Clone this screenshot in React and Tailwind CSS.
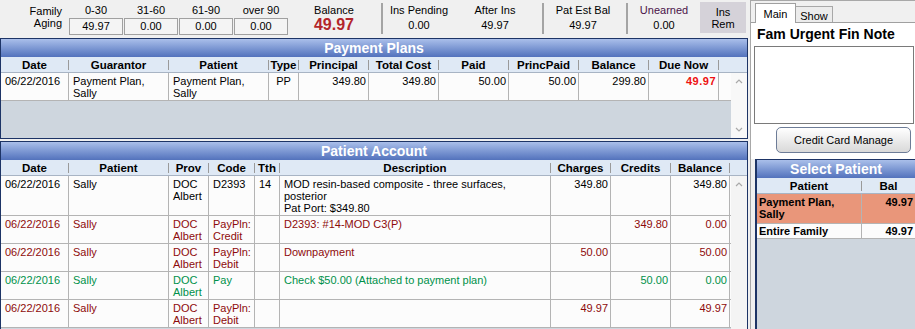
import React from "react";

const aging = [
  ["0-30", "49.97"],
  ["31-60", "0.00"],
  ["61-90", "0.00"],
  ["over 90", "0.00"],
];

const ppCols = [
  { w: "w-[68px]", h: "Date" },
  { w: "w-[100px]", h: "Guarantor" },
  { w: "w-[100px]", h: "Patient" },
  { w: "w-[30px]", h: "Type" },
  { w: "w-[70px]", h: "Principal" },
  { w: "w-[70px]", h: "Total Cost" },
  { w: "w-[70px]", h: "Paid" },
  { w: "w-[70px]", h: "PrincPaid" },
  { w: "w-[70px]", h: "Balance" },
  { w: "w-[70px]", h: "Due Now" },
];

const paCols = [
  { w: "w-[68px]", h: "Date" },
  { w: "w-[100px]", h: "Patient" },
  { w: "w-[40px]", h: "Prov" },
  { w: "w-[46px]", h: "Code" },
  { w: "w-[25px]", h: "Tth" },
  { w: "w-[271px]", h: "Description" },
  { w: "w-[60px]", h: "Charges" },
  { w: "w-[60px]", h: "Credits" },
  { w: "w-[59px]", h: "Balance" },
];

const paRows = [
  {
    color: "text-black",
    cells: [
      ["06/22/2016"],
      ["Sally"],
      ["DOC", "Albert"],
      ["D2393"],
      ["14"],
      ["MOD resin-based composite - three surfaces,", "posterior", "Pat Port: $349.80"],
      ["349.80"],
      [""],
      ["349.80"],
    ],
  },
  {
    color: "text-[#8e0b0b]",
    cells: [
      ["06/22/2016"],
      ["Sally"],
      ["DOC", "Albert"],
      ["PayPln:", "Credit"],
      [""],
      ["D2393: #14-MOD C3(P)"],
      [""],
      ["349.80"],
      ["0.00"],
    ],
  },
  {
    color: "text-[#8e0b0b]",
    cells: [
      ["06/22/2016"],
      ["Sally"],
      ["DOC", "Albert"],
      ["PayPln:", "Debit"],
      [""],
      ["Downpayment"],
      ["50.00"],
      [""],
      ["50.00"],
    ],
  },
  {
    color: "text-[#00914a]",
    cells: [
      ["06/22/2016"],
      ["Sally"],
      ["DOC", "Albert"],
      ["Pay"],
      [""],
      ["Check $50.00 (Attached to payment plan)"],
      [""],
      ["50.00"],
      ["0.00"],
    ],
  },
  {
    color: "text-[#8e0b0b]",
    cells: [
      ["06/22/2016"],
      ["Sally"],
      ["DOC", "Albert"],
      ["PayPln:", "Debit"],
      [""],
      [""],
      ["49.97"],
      [""],
      ["49.97"],
    ],
  },
];

// numeric columns in patient account are right aligned
const paRight = [false, false, false, false, false, false, true, true, true];

function Chevron({ up }) {
  return (
    <svg width="8" height="6" viewBox="0 0 8 6">
      <path
        d={up ? "M1 5 L4 2 L7 5" : "M1 1 L4 4 L7 1"}
        fill="none"
        stroke="#a9a9a9"
        strokeWidth="1.2"
      />
    </svg>
  );
}

function Sep({ className }) {
  return <div className={`mt-[3px] h-[31px] w-[2px] shrink-0 bg-[#a4a4a4] ${className}`} />;
}

function Stat({ label, value, w, labelColor }) {
  return (
    <div className={`flex shrink-0 flex-col items-center pt-[4px] ${w}`}>
      <div className={`leading-[13px] ${labelColor || ""}`}>{label}</div>
      <div className="mt-[2px] leading-[13px]">{value}</div>
    </div>
  );
}

function TopBar() {
  return (
    <div className="flex h-[38px] shrink-0 items-start">
      <div className="w-[62px] shrink-0 pt-[5px] text-right leading-[12px]">
        Family
        <br />
        Aging
      </div>
      <div className="ml-[7px] flex gap-[1px]">
        {aging.map(([l, v]) => (
          <div key={l} className="flex w-[54px] flex-col items-center">
            <div className="pt-[4px] leading-[13px]">{l}</div>
            <div className="mt-[1px] flex h-[17px] w-full items-center justify-center border border-[#a0a0a0] bg-[#f4f4f4] leading-[15px]">
              {v}
            </div>
          </div>
        ))}
      </div>
      <div className="ml-[12px] flex w-[68px] shrink-0 flex-col items-center pt-[4px]">
        <div className="leading-[13px]">Balance</div>
        <div className="text-[16px] font-bold leading-[16px] text-[#b3262b]">49.97</div>
      </div>
      <Sep className="ml-[13px]" />
      <Stat label="Ins Pending" value="0.00" w="w-[72px]" />
      <Stat label="After Ins" value="49.97" w="w-[80px]" />
      <Sep className="ml-[7px]" />
      <Stat label="Pat Est Bal" value="49.97" w="w-[78px]" />
      <Sep className="ml-[4px]" />
      <Stat label="Unearned" value="0.00" w="w-[72px]" labelColor="text-[#4a1048]" />
      <div className="ml-auto mr-[2px] mt-[2px] flex h-[31px] w-[46px] shrink-0 flex-col items-center justify-center bg-[#d5d2d9] leading-[12px]">
        <span>Ins</span>
        <span>Rem</span>
      </div>
    </div>
  );
}

function GridTitle({ children }) {
  return (
    <div className="flex h-[18px] shrink-0 items-center justify-center bg-linear-to-b from-[#aabfea] to-[#5372bc] text-[14px] font-bold leading-[18px] text-white">
      {children}
    </div>
  );
}

function HeadRow({ cols }) {
  return (
    <div className="flex h-[16px] shrink-0 border-b border-[#a8b4c4] bg-[#dfe9f5] text-[11.5px] font-bold">
      {cols.map((c) => (
        <div
          key={c.h}
          className={`my-[3px] flex h-[10px] shrink-0 items-center justify-center border-r border-[#9a9a9a] leading-[10px] whitespace-nowrap ${c.w}`}
        >
          {c.h}
        </div>
      ))}
    </div>
  );
}

function Cell({ w, right, lines, extra }) {
  return (
    <div
      className={`shrink-0 overflow-hidden border-r border-[#b4b4b4] pb-[1px] pt-[2px] leading-[12px] whitespace-nowrap ${w} ${
        right ? "pr-[2px] text-right" : "pl-[4px]"
      } ${extra || ""}`}
    >
      {lines.map((l, i) => (
        <div key={i}>{l || "\u00a0"}</div>
      ))}
    </div>
  );
}

function PaymentPlans() {
  const row = [
    ["06/22/2016"],
    ["Payment Plan,", "Sally"],
    ["Payment Plan,", "Sally"],
    ["PP"],
    ["349.80"],
    ["349.80"],
    ["50.00"],
    ["50.00"],
    ["299.80"],
    ["49.97"],
  ];
  return (
    <div className="flex h-[101px] shrink-0 flex-col border border-[#1d3466]">
      <GridTitle>Payment Plans</GridTitle>
      <HeadRow cols={ppCols} />
      <div className="flex min-h-0 flex-1">
        <div className="flex flex-1 flex-col bg-[#ced6de]">
          <div className="flex border-b border-[#b4b4b4] bg-[#fcfcfc]">
            {row.map((lines, i) => (
              <Cell
                key={i}
                w={ppCols[i].w}
                right={i >= 4}
                lines={lines}
                extra={
                  i === 3
                    ? "!pl-0 text-center"
                    : i === 9
                    ? "font-bold text-[#ee1111] tracking-[0.5px]"
                    : ""
                }
              />
            ))}
          </div>
        </div>
        <div className="flex w-[16px] shrink-0 flex-col items-center justify-between bg-[#f8f8f8] py-[5px]">
          <Chevron up />
          <Chevron />
        </div>
      </div>
    </div>
  );
}

function PatientAccount() {
  return (
    <div className="mt-[2px] flex min-h-0 flex-1 flex-col overflow-hidden border border-b-0 border-[#1d3466]">
      <GridTitle>Patient Account</GridTitle>
      <HeadRow cols={paCols} />
      <div className="flex min-h-0 flex-1">
        <div className="flex flex-1 flex-col bg-[#ced6de]">
          {paRows.map((r, ri) => (
            <div key={ri} className={`flex border-b border-[#b4b4b4] bg-[#fcfcfc] ${r.color}`}>
              {r.cells.map((lines, i) => (
                <Cell key={i} w={paCols[i].w} right={paRight[i]} lines={lines} />
              ))}
            </div>
          ))}
        </div>
        <div className="flex w-[16px] shrink-0 flex-col items-center bg-[#f4f4f4] pt-[5px]">
          <Chevron up />
        </div>
      </div>
    </div>
  );
}

function SelectPatient() {
  return (
    <div className="ml-[4px] flex min-h-0 flex-1 flex-col border-l-2 border-t border-[#1d3466]">
      <GridTitle>Select Patient</GridTitle>
      <div className="flex h-[16px] shrink-0 border-b border-[#a8b4c4] bg-[#dfe9f5] text-[11.5px] font-bold">
        <div className="my-[3px] flex h-[10px] w-[105px] shrink-0 items-center justify-center border-r border-[#9a9a9a] leading-[10px]">
          Patient
        </div>
        <div className="my-[3px] flex h-[10px] flex-1 items-center justify-center leading-[10px]">
          Bal
        </div>
      </div>
      <div className="flex flex-1 flex-col bg-[#ced6de] font-bold">
        <div className="flex border-b border-[#b4b4b4] bg-[#e9967a]">
          <div className="w-[105px] shrink-0 border-r border-[#b4b4b4] pb-[3px] pl-[2px] pt-[2px] leading-[12px]">
            Payment Plan,
            <br />
            Sally
          </div>
          <div className="flex-1 pr-[2px] pt-[2px] text-right leading-[12px]">49.97</div>
        </div>
        <div className="flex border-b border-[#b4b4b4] bg-[#fcfcfc]">
          <div className="w-[105px] shrink-0 border-r border-[#b4b4b4] pb-[1px] pl-[2px] pt-[1px] leading-[12px]">
            Entire Family
          </div>
          <div className="flex-1 pr-[2px] pt-[1px] text-right leading-[12px]">49.97</div>
        </div>
      </div>
    </div>
  );
}

function RightPanel() {
  return (
    <div className="ml-[2px] flex w-[165px] shrink-0 flex-col border-l border-t border-[#a8a8a8] bg-[#f0f0f0]">
      <div className="flex h-[21px] shrink-0 items-end pl-[4px]">
        <div className="relative z-10 -mb-px flex h-[20px] w-[41px] justify-center border border-b-0 border-[#a0a0a0] bg-white pt-[4px] leading-[12px]">
          Main
        </div>
        <div className="flex h-[16px] w-[37px] justify-center border border-b-0 border-l-0 border-[#a8a8a8] bg-[#ececec] pt-[3px] leading-[12px]">
          Show
        </div>
      </div>
      <div className="flex h-[137px] shrink-0 flex-col border-t border-[#a0a0a0] bg-white">
        <div className="pl-[6px] pt-[3px] text-[14px] font-bold leading-[16px]">
          Fam Urgent Fin Note
        </div>
        <div className="ml-[3px] mt-[4px] h-[78px] w-[160px] shrink-0 border border-[#7a7a7a] bg-white" />
        <div className="ml-[25px] mt-[3px] flex h-[26px] w-[135px] shrink-0 items-center justify-center rounded-[5px] border border-[#6d7c97] bg-linear-to-b from-[#ffffff] to-[#d9d9d9] leading-[12px]">
          Credit Card Manage
        </div>
      </div>
      <SelectPatient />
    </div>
  );
}

export default function App() {
  return (
    <div className="flex h-[329px] w-[915px] overflow-hidden bg-[#f0f0f0] font-['Liberation_Sans',Arial,sans-serif] text-[11px] text-black">
      <div className="flex w-[748px] shrink-0 flex-col">
        <TopBar />
        <PaymentPlans />
        <PatientAccount />
      </div>
      <RightPanel />
    </div>
  );
}
